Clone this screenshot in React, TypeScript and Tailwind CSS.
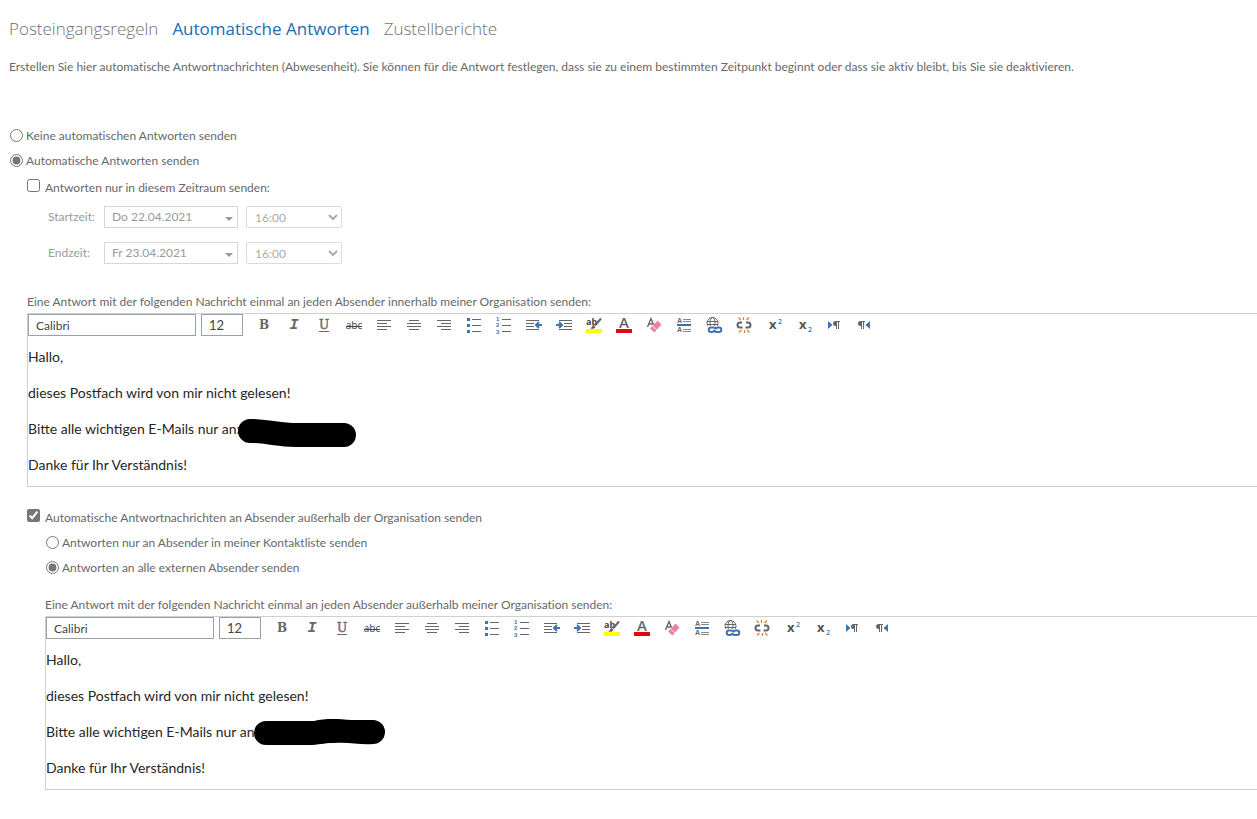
import React, { useState } from "react";

interface ToolIconProps {
  name: string;
}

const GRAY = "#666666";
const BLUE = "#3f73b0";

const ToolIcon: React.FC<ToolIconProps> = ({ name }) => {
  switch (name) {
    case "Fett":
      return (
        <text x="10" y="14" textAnchor="middle" fontFamily="DejaVu Serif" fontWeight="bold" fontSize="12" fill={GRAY}>
          B
        </text>
      );
    case "Kursiv":
      return (
        <text x="10" y="14" textAnchor="middle" fontFamily="Liberation Mono" fontWeight="bold" fontStyle="italic" fontSize="15" fill={GRAY}>
          I
        </text>
      );
    case "Unterstrichen":
      return (
        <>
          <text x="10" y="14" textAnchor="middle" fontFamily="DejaVu Serif" fontSize="12" fill={GRAY} stroke={GRAY} strokeWidth="0.4">
            U
          </text>
          <path d="M5 16.5h10" stroke={GRAY} />
        </>
      );
    case "Durchgestrichen":
      return (
        <>
          <text x="10" y="14" textAnchor="middle" fontFamily="Open Sans" fontSize="10" fill="#444444">
            abc
          </text>
          <path d="M2 11.5h16" stroke="#444444" />
        </>
      );
    case "Linksbündig":
      return <path d="M3 5.5h14M3 8.5h10M3 11.5h14M3 14.5h10" stroke={GRAY} />;
    case "Zentriert":
      return <path d="M5 5.5h10M3 8.5h14M5 14.5h10M3 11.5h14" stroke={GRAY} />;
    case "Rechtsbündig":
      return <path d="M3 5.5h14M7 8.5h10M3 11.5h14M7 14.5h10" stroke={GRAY} />;
    case "Aufzählung":
      return (
        <>
          <path d="M8 4.5h9M8 10.5h9M8 16.5h9" stroke={GRAY} />
          <path d="M3 3h3v3h-3zM3 9h3v3h-3zM3 15h3v3h-3z" fill={BLUE} />
        </>
      );
    case "Nummerierung":
      return (
        <>
          <path d="M8 4.5h9M8 10.5h9M8 16.5h9" stroke={GRAY} />
          <g fontFamily="Liberation Sans" fontWeight="bold" fontSize="6" fill={BLUE}>
            <text x="2" y="6">1</text>
            <text x="2" y="12">2</text>
            <text x="2" y="19">3</text>
          </g>
        </>
      );
    case "Einzug verkleinern":
      return (
        <>
          <path d="M2 5.5h13M2 8.5h8M2 11.5h8M2 14.5h13" stroke={GRAY} />
          <path d="M18 10h-5M15 7L12 10l3 3" stroke={BLUE} strokeWidth="2" />
        </>
      );
    case "Einzug vergrößern":
      return (
        <>
          <path d="M5 5.500h13M10 8.500h8M10 11.500h8M5 14.500h13" stroke={GRAY} />
          <path d="M2 10h5M5 7L8 10l-3 3" stroke={BLUE} strokeWidth="2" />
        </>
      );
    case "Hervorheben":
      return (
        <>
          <text x="2" y="10" fontFamily="Open Sans" fontWeight="bold" fontSize="9" fill="#444444">
            ab
          </text>
          <path d="M17 3.500L11 10.500" stroke={GRAY} strokeWidth="2" />
          <path d="M6 13.500c2 0 1.500-3 3.500-3.500l2 2c-1 2-3.500 2-5.500 1.500z" fill={GRAY} />
          <path d="M2 14h16v4h-16z" fill="#ffff00" />
        </>
      );
    case "Schriftfarbe":
      return (
        <>
          <text x="10" y="13" textAnchor="middle" fontFamily="Open Sans" fontWeight="600" fontSize="15" fill={GRAY}>
            A
          </text>
          <path d="M2 14h16v4h-16z" fill="#dd0a0a" />
        </>
      );
    case "Formatierung löschen":
      return (
        <>
          <path d="M3.500 12L7 3.500L9.500 9.500M5 9h4" stroke={GRAY} strokeWidth="1.400" />
          <path d="M13.500 5.500l4 4l-7 8l-4.500-4z" fill="#e8849c" />
          <path d="M8.500 11l4.500 4" stroke="#ffffff" strokeWidth="0.8" />
        </>
      );
    case "Linie einfügen":
      return (
        <>
          <g fontFamily="Liberation Sans" fontWeight="bold" fontSize="7" fill={GRAY}>
            <text x="3" y="8">A</text>
            <text x="3" y="17">A</text>
          </g>
          <path d="M9 4.500h8M9 6.500h8M9 14.500h8M9 16.500h8" stroke="#8a8a8a" />
          <path d="M3 9h14v2h-14z" fill={BLUE} />
        </>
      );
    case "Link einfügen":
      return (
        <>
          <g stroke={GRAY}>
            <circle cx="8.500" cy="8" r="5.500" />
            <ellipse cx="8.500" cy="8" rx="2.500" ry="5.500" />
            <path d="M3 6.500h11M3 9.500h11" />
          </g>
          <path d="M4 11h13.500v7H4z" fill="#ffffff" />
          <path d="M10 15.500a2 2 0 0 1-2 1.500h-1a2 2 0 0 1 0-4.500h2.500a2 2 0 0 1 2 2M12 13.500a2 2 0 0 1 1.500-1h1.500a2 2 0 0 1 0 4.500h-2.500a2 2 0 0 1-2-2" stroke={BLUE} strokeWidth="2" />
        </>
      );
    case "Link entfernen":
      return (
        <>
          <path d="M8 7.500h-2a2.500 2.500 0 0 0 0 5h2.500M12 7.500h2a2.500 2.500 0 0 1 0 5h-2.500" stroke={GRAY} strokeWidth="2" />
          <path d="M4.500 2.500l2.500 2.500M9.500 2v3M15 2.500l-2.500 2.500M5 17.500l2.500-2.500M10.500 15v3M15.500 17.500L13 15" stroke="#dd7a33" strokeWidth="1.200" />
        </>
      );
    case "Hochgestellt":
      return (
        <>
          <text x="5" y="14" fontFamily="Open Sans" fontWeight="bold" fontSize="13" fill="#555555">
            x
          </text>
          <text x="14" y="9" fontFamily="Open Sans" fontWeight="600" fontSize="7" fill={BLUE}>
            2
          </text>
        </>
      );
    case "Tiefgestellt":
      return (
        <>
          <text x="5" y="14" fontFamily="Open Sans" fontWeight="bold" fontSize="13" fill="#555555">
            x
          </text>
          <text x="14" y="17" fontFamily="Open Sans" fontWeight="600" fontSize="7" fill={BLUE}>
            2
          </text>
        </>
      );
    case "Von links nach rechts":
      return (
        <>
          <path d="M4 6l4.500 4l-4.500 4z" fill={BLUE} />
          <path d="M12 6.500h4M12.500 6v8M14.500 6v8" stroke={GRAY} />
          <path d="M13 6h-1.500a2.500 2.500 0 0 0 0 5h1.500z" fill={GRAY} />
        </>
      );
    case "Von rechts nach links":
      return (
        <>
          <path d="M16 6l-4.500 4l4.500 4z" fill={BLUE} />
          <path d="M7 6.500h4M7.500 6v8M9.500 6v8" stroke={GRAY} />
          <path d="M8 6h-1.500a2.500 2.500 0 0 0 0 5h1.500z" fill={GRAY} />
        </>
      );
    default:
      return null;
  }
};

const tools = [
  "Fett",
  "Kursiv",
  "Unterstrichen",
  "Durchgestrichen",
  "Linksbündig",
  "Zentriert",
  "Rechtsbündig",
  "Aufzählung",
  "Nummerierung",
  "Einzug verkleinern",
  "Einzug vergrößern",
  "Hervorheben",
  "Schriftfarbe",
  "Formatierung löschen",
  "Linie einfügen",
  "Link einfügen",
  "Link entfernen",
  "Hochgestellt",
  "Tiefgestellt",
  "Von links nach rechts",
  "Von rechts nach links",
];

interface EditorProps {
  id: string;
  label: string;
  contact: string;
  children: React.ReactNode;
}

const Editor: React.FC<EditorProps> = ({ id, label, contact, children }) => {
  return (
    <section>
      <h2 id={id} className="h-[19px] leading-4">
        {label}
      </h2>
      <div className="border border-r-0 border-[#d0d0d0]">
        <div className="flex items-center">
          <input
            aria-label="Schriftart"
            defaultValue="Calibri"
            className="h-[22px] w-[168px] shrink-0 border border-[#98a3a6] px-[7px] text-[#444444]"
          />
          <input
            aria-label="Schriftgrad"
            defaultValue="12"
            className="mr-1.5 ml-[5px] h-[22px] w-[42px] shrink-0 border border-[#98a3a6] px-[7px] text-[13px] text-[#444444]"
          />
          {tools.map((tool) => (
            <button key={tool} type="button" aria-label={tool} className="flex w-[30px] shrink-0 justify-center">
              <svg viewBox="0 0 20 20" fill="none" className="size-5 overflow-visible">
                <ToolIcon name={tool} />
              </svg>
            </button>
          ))}
        </div>
        <div
          role="textbox"
          aria-multiline="true"
          aria-labelledby={id}
          className="flex flex-col gap-[18px] pt-3 pb-3 text-sm leading-[18px] text-[#262626] [font-variant-ligatures:normal]"
        >
          <p>Hallo,</p>
          <p>dieses Postfach wird von mir nicht gelesen!</p>
          <p className="flex">
            {contact}
            {children}
          </p>
          <p>Danke für Ihr Verständnis!</p>
        </div>
      </div>
    </section>
  );
};

interface PeriodRowProps {
  id: string;
  label: string;
  date: string;
}

const PeriodRow: React.FC<PeriodRowProps> = ({ id, label, date }) => {
  return (
    <div className="flex h-[22px] items-center text-[#969c9c]">
      <label htmlFor={id} className="w-14">
        {label}
      </label>
      <button
        id={id}
        type="button"
        disabled
        className="flex h-full w-[134px] items-center justify-between border border-[#d4d8d8] pr-1 pl-[7px]"
      >
        {date}
        <svg viewBox="0 0 8 8" className="size-2">
          <path d="M0 4h8l-4 4z" fill="#999999" />
        </svg>
      </button>
      <select
        aria-label={`${label} Uhrzeit`}
        disabled
        className="ml-2 h-full w-24 rounded-xs border border-[#d8dcdc] bg-white pl-1 text-[#a8acac]"
      >
        <option>16:00</option>
      </select>
    </div>
  );
};

interface ChoiceProps {
  name: string;
  label: string;
  checked: boolean;
  onSelect: () => void;
}

const Choice: React.FC<ChoiceProps> = ({ name, label, checked, onSelect }) => {
  return (
    <label className="flex h-[25px] items-center gap-[3px]">
      <input type="radio" name={name} checked={checked} onChange={onSelect} className="size-[13px] accent-[#757575]" />
      {label}
    </label>
  );
};

const App: React.FC = () => {
  const [active, setActive] = useState(true);
  const [usePeriod, setUsePeriod] = useState(false);
  const [external, setExternal] = useState(true);
  const [allSenders, setAllSenders] = useState(true);

  return (
    <main className="overflow-hidden pt-[17px] pb-7 font-['Lato','Open_Sans',sans-serif] text-xs whitespace-nowrap text-[#686868] [font-variant-ligatures:none]">
      <nav className="flex gap-3.5 pl-[9px] font-['Open_Sans',sans-serif] text-[17px] leading-6 font-light text-[#707070]">
        <a href="#regeln">Posteingangsregeln</a>
        <a href="#antworten" aria-current="page" className="font-normal text-[#1a6cb4]">
          Automatische Antworten
        </a>
        <a href="#berichte">Zustellberichte</a>
      </nav>

      <p className="mt-[18px] pl-[9px]">
        Erstellen Sie hier automatische Antwortnachrichten (Abwesenheit). Sie können für die Antwort festlegen, dass sie
        zu einem bestimmten Zeitpunkt beginnt oder dass sie aktiv bleibt, bis Sie sie deaktivieren.
      </p>

      <div className="mt-12 pl-2.5">
        <Choice name="mode" label="Keine automatischen Antworten senden" checked={!active} onSelect={() => setActive(false)} />
        <Choice name="mode" label="Automatische Antworten senden" checked={active} onSelect={() => setActive(true)} />
      </div>

      <div className="pl-[27px]">
        <label className="mt-0.5 flex h-[26px] items-center gap-[5px]">
          <input
            type="checkbox"
            checked={usePeriod}
            onChange={() => setUsePeriod(!usePeriod)}
            className="mb-[5px] size-[13px] accent-[#757575]"
          />
          Antworten nur in diesem Zeitraum senden:
        </label>
        <div className="mt-[5px] flex flex-col gap-3.5 pl-[21px]">
          <PeriodRow id="start" label="Startzeit:" date="Do 22.04.2021" />
          <PeriodRow id="end" label="Endzeit:" date="Fr 23.04.2021" />
        </div>

        <div className="mt-[30px]">
          <Editor
            id="internal"
            label="Eine Antwort mit der folgenden Nachricht einmal an jeden Absender innerhalb meiner Organisation senden:"
            contact="Bitte alle wichtigen E-Mails nur an:"
          >
            <svg viewBox="0 0 118 28" className="-mt-px -mb-[9px] -ml-0.5 h-7 w-[118px]">
              <path d="M12 0C24 0 38 3 54 4H106A12 12 0 0 1 106 28H58C40 28 26 24 12 24A12 12 0 0 1 12 0Z" />
            </svg>
          </Editor>
        </div>

        <label className="mt-[18px] flex h-[26px] items-center gap-[5px]">
          <input
            type="checkbox"
            checked={external}
            onChange={() => setExternal(!external)}
            className="mb-[5px] size-[13px] accent-[#757575]"
          />
          Automatische Antwortnachrichten an Absender außerhalb der Organisation senden
        </label>
        <div className="-mt-px pl-[18px]">
          <div className="pl-px">
            <Choice
              name="scope"
              label="Antworten nur an Absender in meiner Kontaktliste senden"
              checked={!allSenders}
              onSelect={() => setAllSenders(false)}
            />
            <Choice
              name="scope"
              label="Antworten an alle externen Absender senden"
              checked={allSenders}
              onSelect={() => setAllSenders(true)}
            />
          </div>
          <div className="mt-[17px]">
            <Editor
              id="outside"
              label="Eine Antwort mit der folgenden Nachricht einmal an jeden Absender außerhalb meiner Organisation senden:"
              contact="Bitte alle wichtigen E-Mails nur an"
            >
              <svg viewBox="0 0 132 26" className="-my-1 h-[26px] w-[132px]">
                <path d="M12 2H60C72 -1 84 0 98 1H119A12 12 0 0 1 119 25C106 26 96 23 80 24C68 24 66 26 54 26H12A12 12 0 0 1 12 2Z" />
              </svg>
            </Editor>
          </div>
        </div>
      </div>
    </main>
  );
};

export default App;
